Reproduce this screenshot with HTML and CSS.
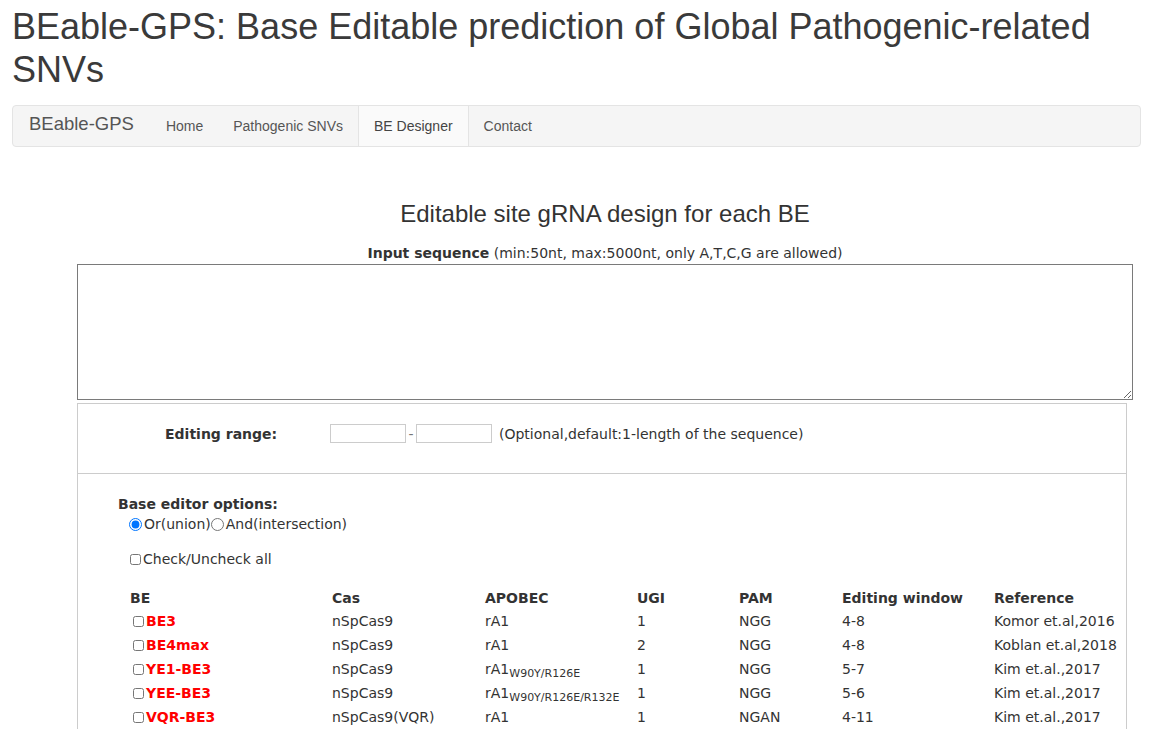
FILE: index.html
```html
<!DOCTYPE html>
<html lang="en">
<head>
<meta charset="UTF-8" />
<title>BEable-GPS: BE Designer</title>
<link rel="stylesheet" href="styles.css">
</head>
<body>
<div class="page">
  <h1>BEable-GPS: Base Editable prediction of Global Pathogenic-related SNVs</h1>

  <nav class="navbar">
    <a class="brand" href="#">BEable-GPS</a>
    <ul class="nav">
      <li><a href="#">Home</a></li>
      <li><a href="#">Pathogenic SNVs</a></li>
      <li class="active"><a href="#">BE Designer</a></li>
      <li><a href="#">Contact</a></li>
    </ul>
  </nav>

  <main class="designer">
    <h2>Editable site gRNA design for each BE</h2>
    <p class="seq-label"><b>Input sequence</b> (min:50nt, max:5000nt, only A,T,C,G are allowed)</p>
    <textarea class="seq-input" name="sequence"></textarea>

    <div class="design-box">
      <div class="range-row">
        <span class="range-label">Editing range:</span>
        <input type="text" class="range-input" name="start" />
        <span class="dash">-</span>
        <input type="text" class="range-input" name="end" />
        <span class="range-note">(Optional,default:1-length of the sequence)</span>
      </div>

      <div class="options">
        <div class="opt-title">Base editor options:</div>
        <div class="radios">
          <label><input type="radio" name="mode" checked />Or(union)</label><label><input type="radio" name="mode" />And(intersection)</label>
        </div>
        <label class="check-all"><input type="checkbox" />Check/Uncheck all</label>

        <table class="be-table">
          <colgroup>
            <col class="c-be"><col class="c-cas"><col class="c-apo"><col class="c-ugi"><col class="c-pam"><col class="c-win"><col>
          </colgroup>
          <thead>
            <tr><th>BE</th><th>Cas</th><th>APOBEC</th><th>UGI</th><th>PAM</th><th>Editing window</th><th>Reference</th></tr>
          </thead>
          <tbody>
            <tr><td><label class="be"><input type="checkbox" />BE3</label></td><td>nSpCas9</td><td>rA1</td><td>1</td><td>NGG</td><td>4-8</td><td>Komor et.al,2016</td></tr>
            <tr><td><label class="be"><input type="checkbox" />BE4max</label></td><td>nSpCas9</td><td>rA1</td><td>2</td><td>NGG</td><td>4-8</td><td>Koblan et.al,2018</td></tr>
            <tr><td><label class="be"><input type="checkbox" />YE1-BE3</label></td><td>nSpCas9</td><td>rA1<sub>W90Y/R126E</sub></td><td>1</td><td>NGG</td><td>5-7</td><td>Kim et.al.,2017</td></tr>
            <tr><td><label class="be"><input type="checkbox" />YEE-BE3</label></td><td>nSpCas9</td><td>rA1<sub>W90Y/R126E/R132E</sub></td><td>1</td><td>NGG</td><td>5-6</td><td>Kim et.al.,2017</td></tr>
            <tr><td><label class="be"><input type="checkbox" />VQR-BE3</label></td><td>nSpCas9(VQR)</td><td>rA1</td><td>1</td><td>NGAN</td><td>4-11</td><td>Kim et.al.,2017</td></tr>
          </tbody>
        </table>
      </div>
    </div>
  </main>
</div>
</body>
</html>
```

FILE: styles.css
```css
body {
  margin: 0;
  font-family: "DejaVu Sans", Verdana, sans-serif;
  font-size: 14px;
  color: #333;
  background: #fff;
}
.page {
  padding: 0 8px 0 12px;
}
h1 {
  font-family: "Liberation Sans", Arial, sans-serif;
  font-weight: normal;
  font-size: 36px;
  line-height: 43px;
  margin: 5px 0 14px;
  color: #3a3a3a;
}

/* Navbar */
.navbar {
  display: flex;
  align-items: center;
  height: 40px;
  background: #f5f5f5;
  border: 1px solid #e4e4e4;
  border-radius: 4px;
}
.brand {
  font-family: "Liberation Sans", Arial, sans-serif;
  font-size: 18.5px;
  color: #555;
  text-decoration: none;
  padding: 0 17px 0 16px;
  line-height: 40px;
  margin-top: -4px;
}
.nav {
  display: flex;
  list-style: none;
  margin: 0;
  padding: 0;
  height: 100%;
}
.nav li a {
  display: block;
  font-family: "Liberation Sans", Arial, sans-serif;
  font-size: 14px;
  color: #555;
  text-decoration: none;
  padding: 0 15px;
  line-height: 40px;
}
.nav li.active a {
  background: #fafafa;
  border-left: 1px solid #e4e4e4;
  border-right: 1px solid #e4e4e4;
  color: #444;
}

/* Designer */
.designer {
  width: 1056px;
  margin: 0 0 0 65px;
}
.designer h2 {
  font-family: "Liberation Sans", Arial, sans-serif;
  font-weight: normal;
  font-size: 24px;
  line-height: 28px;
  text-align: center;
  margin: 53px 0 16px;
}
.seq-label {
  text-align: center;
  margin: 0 0 2px;
  line-height: 18px;
}
.seq-input {
  display: block;
  box-sizing: border-box;
  width: 1056px;
  height: 136px;
  margin: 0;
  border: 1px solid #7a7a7a;
  resize: both;
}
.design-box {
  width: 1050px;
  box-sizing: border-box;
  margin-top: 3px;
  border: 1px solid #ccc;
  border-bottom: none;
}
.range-row {
  display: flex;
  align-items: center;
  box-sizing: border-box;
  height: 70px;
  padding: 0 0 10px 87px;
  border-bottom: 1px solid #ccc;
}
.range-label {
  font-weight: bold;
  width: 165px;
}
.range-input {
  box-sizing: border-box;
  width: 76px;
  height: 19px;
  padding: 0 2px;
  border: 1px solid #ccc;
  margin: 0;
}
.dash {
  width: 10px;
  text-align: center;
  color: #777;
}
.range-note {
  margin-left: 7px;
}
.options {
  padding: 20px 0 0 40px;
}
.opt-title {
  font-weight: bold;
  line-height: 20px;
}
.radios {
  padding-left: 11px;
  line-height: 20px;
}
.radios input {
  width: 13px;
  height: 13px;
  margin: 0 2px 0 0;
  vertical-align: -2px;
}
.check-all {
  display: block;
  margin: 15px 0 0 11px;
  line-height: 20px;
}
.check-all input, .be input {
  width: 11px;
  height: 11px;
  margin: 0 2px 0 1px;
  vertical-align: -1px;
}
.be input {
  margin-left: 3px;
}
.be-table {
  border-collapse: collapse;
  margin: 18px 0 0 12px;
  table-layout: fixed;
}
.be-table th, .be-table td {
  text-align: left;
  padding: 0;
  height: 24px;
  white-space: nowrap;
}
.be-table th {
  height: 22px;
}
.c-be { width: 202px; }
.c-cas { width: 153px; }
.c-apo { width: 152px; }
.c-ugi { width: 102px; }
.c-pam { width: 103px; }
.c-win { width: 152px; }
.be {
  color: #ff0000;
  font-weight: bold;
}
.be-table sub {
  font-size: 11px;
  vertical-align: -3px;
  line-height: 0;
}
```
